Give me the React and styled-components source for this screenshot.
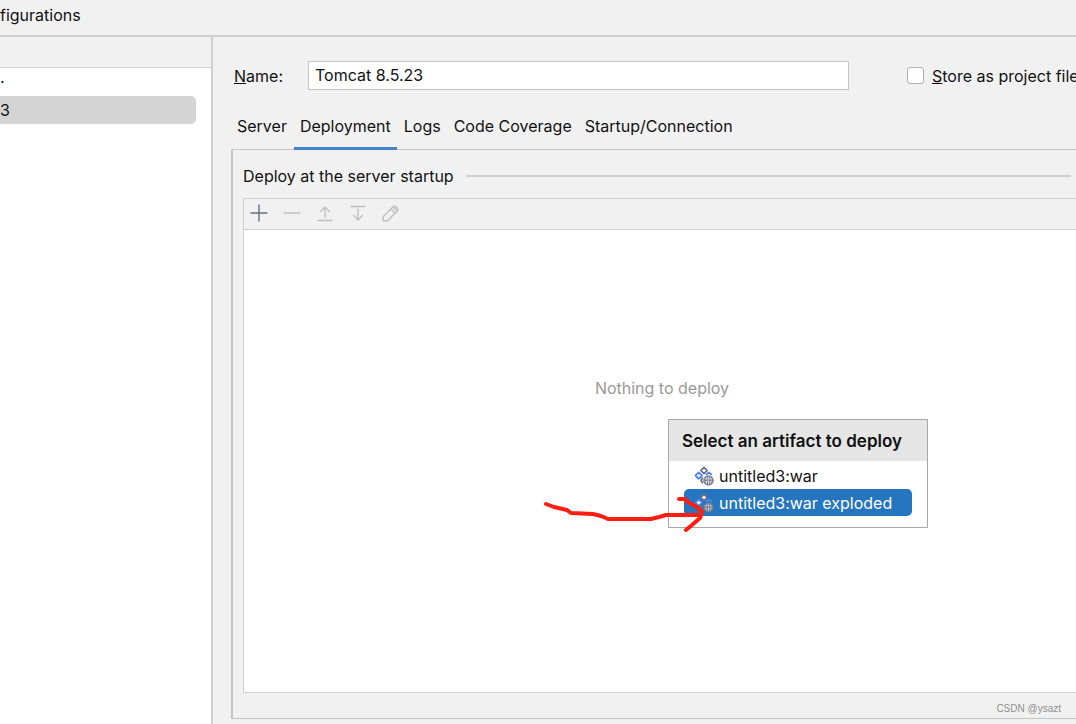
import React, { useState } from "react";
import styled, { createGlobalStyle } from "styled-components";

const GlobalStyle = createGlobalStyle`
  * {
    box-sizing: border-box;
  }
  body {
    margin: 0;
    overflow: hidden;
    background: #f1f1f1;
    color: #111;
    font-family: Inter, sans-serif;
    font-size: 16px;
    line-height: 20px;
  }
  button, input {
    color: inherit;
    font: inherit;
  }
`;

const Dialog = styled.div`
  display: flex;
  flex-direction: column;
  height: 100vh;
`;

const TitleBar = styled.header`
  border-bottom: 2px solid #d0d0d0;
  flex: none;
  padding: 5px 0 10px;
`;

const Body = styled.div`
  display: flex;
  flex: 1;
  min-height: 0;
`;

const Sidebar = styled.aside`
  background: #fff;
  border-right: 2px solid #d0d0d0;
  flex: none;
  width: 213px;
`;

const SidebarToolbar = styled.div`
  background: #f1f1f1;
  border-bottom: 1px solid #d0d0d0;
  height: 31px;
`;

const ConfigItem = styled.button`
  background: ${({ $selected }) => ($selected ? "#d4d4d4" : "transparent")};
  border: 0;
  border-radius: 0 5px 5px 0;
  display: block;
  height: 28px;
  padding: 0;
  text-align: left;
  width: 196px;
`;

const Main = styled.main`
  display: flex;
  flex: 1;
  flex-direction: column;
  min-width: 0;
  padding: 24px 0 5px 18px;
`;

const NameRow = styled.div`
  align-items: center;
  display: flex;
  height: 29px;
  white-space: nowrap;
`;

const NameLabel = styled.label`
  flex: none;
  padding-left: 3px;
  width: 77px;
`;

const NameInput = styled.input`
  background: #fff;
  border: 1px solid #c4c4c4;
  flex: 1;
  height: 29px;
  min-width: 0;
  outline: 0;
  padding: 0 6px 2px;
`;

const StoreLabel = styled.label`
  align-items: center;
  display: flex;
  flex: none;
  gap: 8px;
  margin-left: 58px;
  overflow: hidden;
  width: 169px;
`;

const Checkbox = styled.input`
  appearance: none;
  background: #fff;
  border: 1px solid #b0b0b0;
  border-radius: 3px;
  flex: none;
  height: 17px;
  margin: 0;
  width: 17px;
  &:checked {
    background: #4083c9;
  }
`;

const Tabs = styled.div`
  display: flex;
  gap: 1px;
  margin-top: 14px;
  position: relative;
`;

const Tab = styled.button`
  background: none;
  border: 0;
  border-bottom: 3px solid ${({ $active }) => ($active ? "#4083c9" : "transparent")};
  height: 46px;
  padding: 0 6px;
`;

const TabPanel = styled.section`
  border: solid #c4c4c4;
  border-width: 1px 0 1px 2px;
  display: flex;
  flex: 1;
  flex-direction: column;
  margin-top: -1px;
  min-height: 0;
  padding: 16px 0 25px 10px;
`;

const GroupTitle = styled.h2`
  align-items: center;
  display: flex;
  font-size: 16px;
  font-weight: 400;
  gap: 12px;
  margin: 0 5px 12px 0;
  &::after {
    background: #d0d0d0;
    content: "";
    flex: 1;
    height: 2px;
  }
`;

const ListBox = styled.div`
  border: solid #d0d0d0;
  border-width: 1px 0 1px 1px;
  display: flex;
  flex: 1;
  flex-direction: column;
`;

const Toolbar = styled.div`
  border-bottom: 1px solid #d0d0d0;
  display: flex;
  gap: 13px;
  height: 31px;
  padding: 4px 5px;
`;

const ToolButton = styled.button`
  background: none;
  border: 0;
  color: #6c707e;
  height: 20px;
  padding: 0;
  width: 20px;
  &:disabled {
    color: #c0c0c0;
  }
  svg {
    display: block;
  }
`;

const Canvas = styled.div`
  background: #fff;
  flex: 1;
  position: relative;
`;

const EmptyText = styled.p`
  color: #999;
  margin: 0;
  padding: 148px 0 0 4px;
  text-align: center;
`;

const Popup = styled.div`
  background: #fff;
  border: 1px solid #a8a8a8;
  left: 424px;
  padding-bottom: 11px;
  position: absolute;
  top: 189px;
  width: 260px;
`;

const PopupTitle = styled.h3`
  background: #e6e6e6;
  font-size: 17px;
  font-weight: 600;
  margin: 0 0 1px;
  padding: 11px 13px 10px;
  white-space: nowrap;
`;

const Artifact = styled.button`
  align-items: center;
  background: ${({ $selected }) => ($selected ? "#2675bf" : "transparent")};
  border: 0;
  border-radius: 5px;
  color: ${({ $selected }) => ($selected ? "#fff" : "#111")};
  display: flex;
  gap: 5px;
  height: 27px;
  margin: 0 15px;
  padding: 0 10px;
  width: 228px;
  svg {
    flex: none;
  }
`;

const Arrow = styled.svg`
  left: 299px;
  pointer-events: none;
  position: absolute;
  top: 263px;
`;

const Watermark = styled.small`
  bottom: 7px;
  color: #8f8f8f;
  font-family: "Liberation Sans", sans-serif;
  font-size: 10px;
  line-height: 16px;
  position: absolute;
  right: 15px;
`;

const icons = {
  Add: "M10 2v16M2 10h16",
  Remove: "M2 10h16",
  "Move up": "M3 17.5h14M10 14V4M5.5 8.5 10 4l4.5 4.5",
  "Move down": "M3 3.5h14M10 6v11M5.5 12.5 10 17l4.5-4.5",
  Edit: "M2.3 17.7v-4.2L11.8 4q1.6-1.6 3.2 0l1 1q1.6 1.6 0 3.2L6.5 17.7ZM9.8 6l4.2 4.2M12 4l4.1 4.1",
};

const ToolIcon = ({ name }) => (
  <svg width="20" height="20" viewBox="0 0 20 20" fill="none" stroke="currentColor" strokeWidth="1.4" strokeLinecap="round" strokeLinejoin="round">
    <path d={icons[name]} />
  </svg>
);

const ArtifactIcon = ({ selected }) => (
  <svg width="20" height="20" viewBox="0 0 20 20" fill="none" strokeWidth="1.7" strokeLinejoin="round">
    <g fill={selected ? "#fff" : "#f0f3fb"}>
      <path stroke="#6c707e" d="m10 1.3 3.2 3.2-3.2 3.2-3.2-3.2Z" />
      <path stroke="#4682fa" d="m4.7 6.3 3.3 3.3-3.3 3.3-3.3-3.3Z" />
    </g>
    <path stroke="#4682fa" d="m11.9 8.7 3-2.2 3 2.4" />
    <path stroke="#6c707e" d="m8.8 11.5-1.8 3 1.8 2.8" />
    <circle cx="14.5" cy="14.4" r="5.2" fill="#6c707e" />
    <path stroke={selected ? "#a9c0d8" : "#d6d8df"} strokeWidth="0.9" d="M14.5 10.3v8.3M10.4 12.8h8.2M10.4 15.8h8.2M12.8 10.6q-1.8 3.8 0 7.6M16.2 10.6q1.8 3.8 0 7.6" />
  </svg>
);

const tabs = ["Server", "Deployment", "Logs", "Code Coverage", "Startup/Connection"];
const artifacts = ["untitled3:war", "untitled3:war exploded"];

const App = () => {
  const [tab, setTab] = useState("Deployment");
  const [artifact, setArtifact] = useState(artifacts[1]);

  return (
    <Dialog>
      <GlobalStyle />
      <TitleBar>figurations</TitleBar>
      <Body>
        <Sidebar>
          <SidebarToolbar />
          <ConfigItem>·</ConfigItem>
          <ConfigItem $selected>3</ConfigItem>
        </Sidebar>
        <Main>
          <NameRow>
            <NameLabel htmlFor="name">
              <u>N</u>ame:
            </NameLabel>
            <NameInput id="name" defaultValue="Tomcat 8.5.23" />
            <StoreLabel>
              <Checkbox type="checkbox" />
              <span>
                <u>S</u>tore as project file
              </span>
            </StoreLabel>
          </NameRow>
          <Tabs role="tablist">
            {tabs.map((name) => (
              <Tab
                key={name}
                role="tab"
                aria-selected={tab === name}
                $active={tab === name}
                onClick={() => setTab(name)}
              >
                {name}
              </Tab>
            ))}
          </Tabs>
          <TabPanel>
            <GroupTitle>Deploy at the server startup</GroupTitle>
            <ListBox>
              <Toolbar>
                {Object.keys(icons).map((name) => (
                  <ToolButton key={name} aria-label={name} disabled={name !== "Add"}>
                    <ToolIcon name={name} />
                  </ToolButton>
                ))}
              </Toolbar>
              <Canvas>
                <EmptyText>Nothing to deploy</EmptyText>
                <Popup>
                  <PopupTitle>Select an artifact to deploy</PopupTitle>
                  {artifacts.map((name) => (
                    <Artifact
                      key={name}
                      $selected={artifact === name}
                      onClick={() => setArtifact(name)}
                    >
                      <ArtifactIcon selected={artifact === name} />
                      {name}
                    </Artifact>
                  ))}
                </Popup>
                <Arrow width="164" height="42" viewBox="0 0 164 42" fill="none" stroke="#ff1e0f" strokeWidth="4" strokeLinecap="round" strokeLinejoin="round">
                  <path d="M3 11l8 3 13 3 4 3 22 1 8 2 7 3h43l8-2 7-2h32" />
                  <path d="M136 6h6l3 3 9 5 5 5-2 6-8 7-6 5" />
                </Arrow>
              </Canvas>
            </ListBox>
          </TabPanel>
        </Main>
      </Body>
      <Watermark>CSDN @ysazt</Watermark>
    </Dialog>
  );
};

export default App;
